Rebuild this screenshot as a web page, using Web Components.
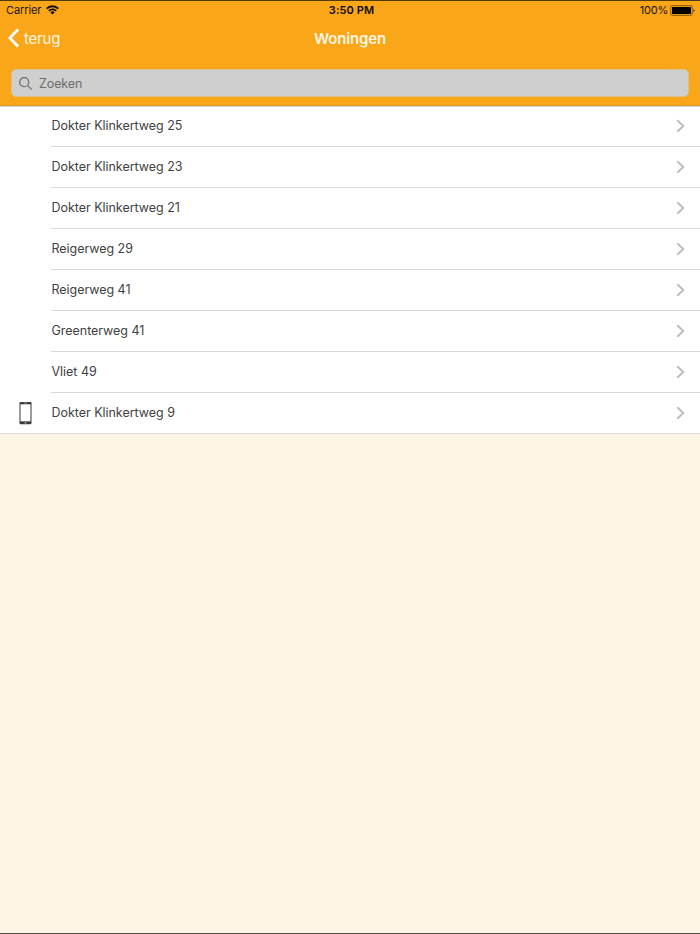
<!DOCTYPE html>
<html lang="nl">
<head>
<meta charset="utf-8">
<title>Woningen</title>
<style>
  body {
    margin: 0;
    font-family: Inter, "Liberation Sans", sans-serif;
    background: #fcf4e4;
  }
</style>
</head>
<body>
<app-screen>
  <status-bar slot="header" carrier="Carrier" time="3:50 PM" battery="100%"></status-bar>
  <nav-bar slot="header" back="terug">Woningen</nav-bar>
  <search-bar slot="header">Zoeken</search-bar>
  <list-row>Dokter Klinkertweg 25</list-row>
  <list-row>Dokter Klinkertweg 23</list-row>
  <list-row>Dokter Klinkertweg 21</list-row>
  <list-row>Reigerweg 29</list-row>
  <list-row>Reigerweg 41</list-row>
  <list-row>Greenterweg 41</list-row>
  <list-row>Vliet 49</list-row>
  <list-row last>
    <phone-icon slot="icon"></phone-icon>Dokter Klinkertweg 9</list-row>
</app-screen>

<script>
class AppScreen extends HTMLElement {
  constructor() {
    super();
    this.attachShadow({mode: "open"}).innerHTML = `
      <style>
        :host {
          display: flex;
          flex-direction: column;
          box-sizing: border-box;
          height: 934px;
          border-top: 1px solid #4f3a12;
          border-bottom: 1px solid #4f4c47;
          background: #fcf4e4;
        }
        header {
          position: relative;
          box-sizing: border-box;
          height: 105px;
          background: #faa619;
          border-bottom: 1px solid #d8972a;
          box-shadow: 0 1px #dcdad8;
        }
      </style>
      <header><slot name="header"></slot></header>
      <main><slot></slot></main>
    `;
  }
}

class StatusBar extends HTMLElement {
  constructor() {
    super();
    this.attachShadow({mode: "open"});
  }

  connectedCallback() {
    this.shadowRoot.innerHTML = `
      <style>
        :host {
          display: grid;
          grid-template-columns: 1fr auto 1fr;
          align-items: center;
          height: 18px;
          padding: 0 5px 0 6px;
          font-size: 11px;
          line-height: 18px;
          color: #1c1405;
        }
        div { display: flex; align-items: center; }
        .left { gap: 5px; letter-spacing: -0.1px; }
        .time { font-weight: 600; color: #100b02; letter-spacing: 0.1px; padding-left: 2px; }
        .right { justify-content: flex-end; gap: 2px; letter-spacing: -0.2px; }
        svg { display: block; }
      </style>
      <div class="left">
        <span>${this.getAttribute("carrier")}</span>
        <svg width="13" height="10" viewBox="0 0 13 10">
          <g fill="none" stroke="#0c0800" stroke-width="1.9">
            <path d="M0.7 3.7a8.2 8.2 0 0 1 11.6 0"/>
            <path d="M2.8 5.9a5.2 5.2 0 0 1 7.4 0"/>
          </g>
          <path d="M4.4 7.4a3 3 0 0 1 4.2 0L6.5 9.6z" fill="#0c0800"/>
        </svg>
      </div>
      <div class="time">${this.getAttribute("time")}</div>
      <div class="right">
        <span>${this.getAttribute("battery")}</span>
        <svg width="25" height="11" viewBox="0 0 25 11">
          <rect x="0.7" y="0.7" width="21.6" height="9.6" rx="1.8" fill="none" stroke="#9c6913" stroke-width="1.2"/>
          <rect x="2" y="2" width="19" height="7" rx="0.5"/>
          <path d="M23.3 3.6q1.5 0.4 1.5 1.9t-1.5 1.9z" fill="#8c5e10"/>
        </svg>
      </div>
    `;
  }
}

class NavBar extends HTMLElement {
  constructor() {
    super();
    this.attachShadow({mode: "open"});
  }

  connectedCallback() {
    this.shadowRoot.innerHTML = `
      <style>
        :host {
          display: grid;
          grid-template-columns: 1fr auto 1fr;
          align-items: center;
          height: 40px;
          padding: 0 8px;
          font-size: 15px;
          line-height: 20px;
          color: #fff5e0;
        }
        .back { display: flex; align-items: center; gap: 5px; letter-spacing: -0.2px; }
        .back svg { margin-bottom: 2px; }
        .title { font-weight: 600; letter-spacing: -0.15px; }
      </style>
      <div class="back">
        <svg width="11" height="20" viewBox="0 0 11 20">
          <path d="M10 1.4L1.9 10L10 18.6" fill="none" stroke="#fff" stroke-width="2.9"/>
        </svg>
        <span>${this.getAttribute("back")}</span>
      </div>
      <div class="title"><slot></slot></div>
    `;
  }
}

class SearchBar extends HTMLElement {
  constructor() {
    super();
    this.attachShadow({mode: "open"}).innerHTML = `
      <style>
        :host { display: block; padding: 10px 11px 9px; }
        .field {
          display: flex;
          align-items: center;
          gap: 7px;
          box-sizing: border-box;
          height: 28px;
          padding-left: 7px;
          border: 1px solid #d9c08f;
          border-radius: 5px;
          background: #cfcfcf;
          color: #6c6c6c;
          font-size: 12.5px;
          line-height: 18px;
          letter-spacing: -0.1px;
        }
        span { padding-top: 2px; }
      </style>
      <div class="field">
        <svg width="13" height="13" viewBox="0 0 13 13">
          <g fill="none" stroke="#6c6c6c" stroke-width="1.2">
            <circle cx="5.2" cy="5.2" r="4.5"/>
            <path d="M8.4 8.4L12.6 12.4"/>
          </g>
        </svg>
        <span><slot></slot></span>
      </div>
    `;
  }
}

class ListRow extends HTMLElement {
  constructor() {
    super();
    this.attachShadow({mode: "open"}).innerHTML = `
      <style>
        :host {
          display: flex;
          height: 41px;
          background: #fff;
          color: #424242;
          font-size: 12.5px;
          line-height: 16px;
          letter-spacing: -0.03px;
        }
        .icon {
          display: flex;
          align-items: center;
          justify-content: center;
          width: 51px;
          padding-bottom: 1px;
          box-sizing: border-box;
        }
        .body {
          flex: 1;
          display: flex;
          align-items: center;
          justify-content: space-between;
          box-sizing: border-box;
          padding: 0 15px 2px 0.5px;
          border-bottom: 1px solid #d9d9db;
        }
        :host([last]) { box-shadow: inset 0 -1px #dedbd5; }
        :host([last]) .body { border-color: transparent; }
        span { padding-top: 2px; }
        svg { margin-top: 2px; }
      </style>
      <div class="icon"><slot name="icon"></slot></div>
      <div class="body">
        <span><slot></slot></span>
        <svg width="9" height="14" viewBox="0 0 9 14">
          <path d="M1.3 1.3L7.2 7L1.3 12.7" fill="none" stroke="#bdbdc2" stroke-width="2"/>
        </svg>
      </div>
    `;
  }
}

class PhoneIcon extends HTMLElement {
  constructor() {
    super();
    this.attachShadow({mode: "open"}).innerHTML = `
      <style>
        :host, svg { display: block; }
      </style>
      <svg width="13" height="24" viewBox="0 0 13 24">
        <rect x="0.5" y="0.9" width="12" height="22.4" rx="1.3" fill="#3b3b3b"/>
        <rect x="1.5" y="3.3" width="10" height="17" fill="#fff"/>
        <path d="M4.8 2.1h3.4" stroke="#aaa" stroke-width="0.7"/>
        <circle cx="6.5" cy="21.8" r="0.9" fill="#aaa"/>
      </svg>
    `;
  }
}

customElements.define("app-screen", AppScreen);
customElements.define("status-bar", StatusBar);
customElements.define("nav-bar", NavBar);
customElements.define("search-bar", SearchBar);
customElements.define("list-row", ListRow);
customElements.define("phone-icon", PhoneIcon);
</script>
</body>
</html>
